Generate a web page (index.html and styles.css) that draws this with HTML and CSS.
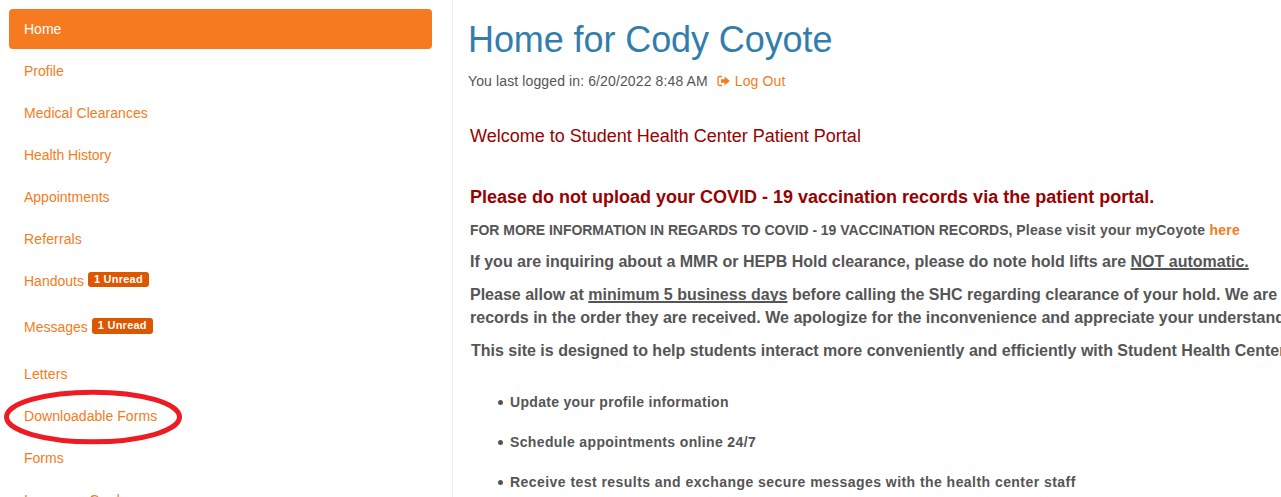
FILE: index.html
```html
<!DOCTYPE html>
<html lang="en">
<head>
<meta charset="utf-8">
<title>Patient Portal</title>
<link rel="stylesheet" href="styles.css">
</head>
<body>
<div class="page">
  <nav class="sidebar">
    <a class="nav-item active">Home</a>
    <a class="nav-item">Profile</a>
    <a class="nav-item loose">Medical Clearances</a>
    <a class="nav-item tight">Health History</a>
    <a class="nav-item">Appointments</a>
    <a class="nav-item looser">Referrals</a>
    <a class="nav-item with-badge">Handouts <span class="badge">1 Unread</span></a>
    <a class="nav-item with-badge messages">Messages <span class="badge">1 Unread</span></a>
    <a class="nav-item looser">Letters</a>
    <a class="nav-item loose circled">Downloadable Forms
      <svg class="circle" width="180" height="56" viewBox="0 0 180 56"><ellipse cx="90" cy="28" rx="86.5" ry="24.8" fill="none" stroke="#ed1c24" stroke-width="5"/></svg>
    </a>
    <a class="nav-item">Forms</a>
    <a class="nav-item">Insurance Cards</a>
  </nav>
  <main class="content">
    <h1 class="title">Home for Cody Coyote</h1>
    <div class="login"><span>You last logged in: 6/20/2022 8:48 AM</span><a class="logout"><svg width="13" height="12" viewBox="0 0 13 12"><path d="M5 1.5H2.8Q1 1.5 1 3.3V8.7Q1 10.5 2.8 10.5H5" fill="none" stroke="currentColor" stroke-width="1.3"/><path d="M4 4.2H7.6V1.4L12.8 6L7.6 10.6V7.8H4Z" fill="currentColor"/></svg>Log Out</a></div>
    <div class="message">
      <p class="welcome">Welcome to Student Health Center Patient Portal</p>
      <p class="warning">Please do not upload your COVID - 19 vaccination records via the patient portal.</p>
      <p class="info">FOR MORE INFORMATION IN REGARDS TO COVID - 19 VACCINATION RECORDS, <span class="visit">Please visit your myCoyote <a class="link">here</a></span></p>
      <p class="notice">If you are inquiring about a MMR or HEPB Hold clearance, please do note hold lifts are <u>NOT automatic.</u></p>
      <p class="notice">Please allow at <u>minimum 5 business days</u> before calling the SHC regarding clearance of your hold. We are processing<br>records in the order they are received. We apologize for the inconvenience and appreciate your understanding.</p>
      <p class="notice site">This site is designed to help students interact more conveniently and efficiently with Student Health Center staff.</p>
      <ul class="features">
        <li class="update">Update your profile information</li>
        <li class="schedule">Schedule appointments online 24/7</li>
        <li class="receive">Receive test results and exchange secure messages with the health center staff</li>
      </ul>
    </div>
  </main>
</div>
</body>
</html>
```
FILE: styles.css
```css
* { box-sizing: border-box; }
body {
  margin: 0;
  background: #fff;
  color: #555;
  font: 14px/20px "Liberation Sans", Arial, sans-serif;
}
.page { display: flex; height: 497px; overflow: hidden; }
.sidebar {
  width: 453px;
  flex: none;
  padding: 9px 20px 0 9px;
  border-right: 1px solid #eee;
  display: flex;
  flex-direction: column;
  gap: 2px;
}
.nav-item {
  flex: none;
  height: 40px;
  padding: 10px 15px;
  color: #f67b20;
  white-space: nowrap;
}
.active { background: #f67b20; color: #fff; border-radius: 4px; }
.loose { letter-spacing: 0.05px; }
.looser { letter-spacing: 0.13px; }
.tight { letter-spacing: -0.06px; }
.with-badge { display: flex; gap: 4px; height: 44px; }
.messages { height: 45px; }
.badge {
  height: 15px;
  margin-top: 1px;
  padding: 0 6px;
  border-radius: 3px;
  background: #dd5600;
  color: #fff;
  font-size: 11px;
  font-weight: bold;
  letter-spacing: 0.24px;
  line-height: 15px;
}
.messages .badge { height: 16px; }
.circled { position: relative; }
.circle { position: absolute; left: -6px; top: -7px; }
.content { flex: 1; min-width: 0; padding: 20px 0 0 15px; white-space: nowrap; overflow: hidden; }
.title { margin: 0 0 11px; color: #317eac; font-size: 36px; font-weight: normal; letter-spacing: -0.09px; line-height: 40px; }
.login { display: flex; gap: 9px; letter-spacing: 0.12px; }
.logout { display: flex; align-items: center; gap: 5px; color: #f67b20; }
.message { padding: 35px 0 0 2px; font-weight: bold; }
.message p { margin: 0; }
.message .welcome { margin-bottom: 41px; color: #900; font-size: 18px; font-weight: normal; }
.message .warning { margin-bottom: 13px; color: #900; font-size: 18px; }
.message .info { margin-bottom: 10px; letter-spacing: -0.04px; }
.visit { letter-spacing: 0.27px; }
.link { color: #f67b20; }
.message .notice { margin-bottom: 10px; font-size: 16px; line-height: 23px; }
.notice u { text-decoration-thickness: 2px; text-decoration-skip-ink: none; text-underline-offset: 1px; }
.message .site { padding-left: 1px; margin-bottom: 30px; }
.features { margin: 0; padding: 0 0 0 40px; display: flex; flex-direction: column; gap: 20px; list-style: none; }
.features li { display: flex; align-items: center; }
.features li::before {
  content: "";
  width: 5px;
  height: 5px;
  margin: 1px 7px 0 -12px;
  border-radius: 50%;
  background: #555;
}
.update { letter-spacing: 0.31px; }
.schedule { letter-spacing: 0.36px; }
.receive { letter-spacing: 0.45px; }
```
